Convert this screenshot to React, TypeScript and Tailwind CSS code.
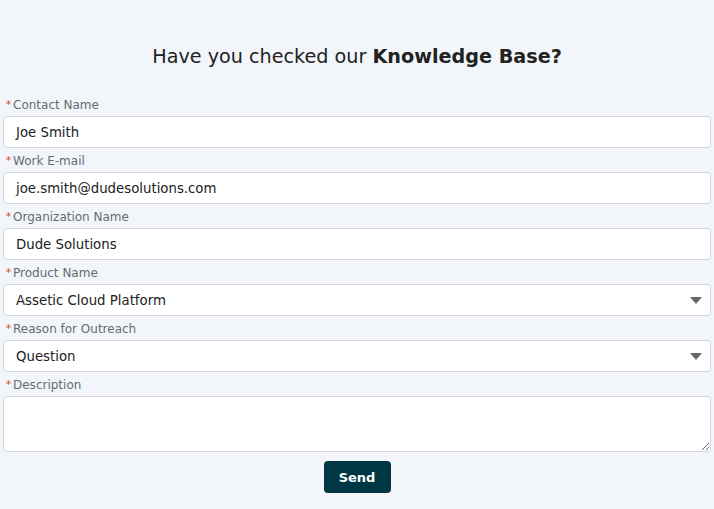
import React from 'react';

const font = { fontFamily: '"DejaVu Sans", "Open Sans", sans-serif' };

const Label: React.FC<{ text: string }> = ({ text }) => (
  <label className="flex items-center h-[20px] pt-[2px] pl-[3px] text-[12px] text-[#666b70]">
    <span className="text-[#d4353b] text-[10px] mr-[2px] leading-none">*</span>
    {text}
  </label>
);

const TextField: React.FC<{ label: string; value: string }> = ({ label, value }) => (
  <div className="flex flex-col">
    <Label text={label} />
    <div className="h-[32px] mt-[2px] flex items-center pt-[2px] bg-white border border-[#d4d7db] rounded-[4px] px-[12px] text-[13.3px] text-[#222]">
      {value}
    </div>
  </div>
);

const SelectField: React.FC<{ label: string; value: string }> = ({ label, value }) => (
  <div className="flex flex-col">
    <Label text={label} />
    <div className="h-[32px] mt-[2px] flex items-center justify-between pt-[2px] bg-white border border-[#d4d7db] rounded-[4px] pl-[12px] pr-[8px] text-[13.3px] text-[#222]">
      <span>{value}</span>
      <svg width="12" height="8" viewBox="0 0 12 8">
        <path d="M0 0 L12 0 L6 7 Z" fill="#666" />
      </svg>
    </div>
  </div>
);

export default function App() {
  return (
    <div className="w-[714px] h-[509px] bg-[#f2f6fa] overflow-hidden" style={font}>
      <h1 className="text-center text-[19.2px] text-[#222] pt-[44px] h-[94px] leading-[26px]">
        Have you checked our <span className="font-bold">Knowledge Base?</span>
      </h1>
      <div className="px-[3px] flex flex-col gap-[2px]">
        <TextField label="Contact Name" value="Joe Smith" />
        <TextField label="Work E-mail" value="joe.smith@dudesolutions.com" />
        <TextField label="Organization Name" value="Dude Solutions" />
        <SelectField label="Product Name" value="Assetic Cloud Platform" />
        <SelectField label="Reason for Outreach" value="Question" />
        <div className="flex flex-col">
          <Label text="Description" />
          <textarea className="h-[56px] mt-[2px] bg-white border border-[#d4d7db] rounded-[4px] resize-y outline-none" />
        </div>
        <div className="flex justify-center mt-[7px]">
          <button className="w-[67px] h-[32px] pt-[1px] bg-[#003745] text-white text-[13px] font-bold rounded-[4px]">
            Send
          </button>
        </div>
      </div>
    </div>
  );
}
